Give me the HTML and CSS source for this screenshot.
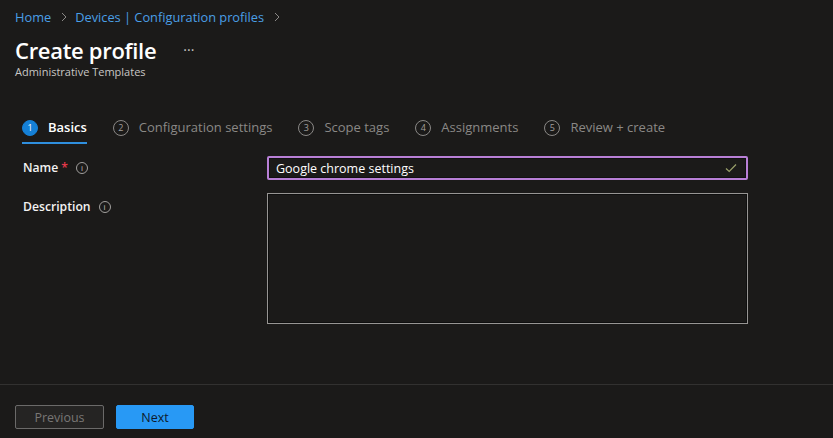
FILE: index.html
```html
<!DOCTYPE html>
<html>
<head>
<meta charset="utf-8">
<link rel="stylesheet" href="styles.css">
</head>
<body>
<div class="page">
  <div class="main">
    <nav class="crumbs">
      <a class="crumb">Home</a>
      <span class="chev"><svg width="8" height="10" viewBox="0 0 8 10"><path d="M2 1 L6 5 L2 9" fill="none" stroke="#8a8886" stroke-width="1"/></svg></span>
      <a class="crumb">Devices | Configuration profiles</a>
      <span class="chev"><svg width="8" height="10" viewBox="0 0 8 10"><path d="M2 1 L6 5 L2 9" fill="none" stroke="#8a8886" stroke-width="1"/></svg></span>
    </nav>
    <div class="title-row">
      <h1 class="title">Create profile</h1>
      <span class="more">···</span>
    </div>
    <div class="subtitle">Administrative Templates</div>

    <div class="steps">
      <div class="step active"><span class="num">1</span><span class="label">Basics</span></div>
      <div class="step"><span class="num">2</span><span class="label">Configuration settings</span></div>
      <div class="step"><span class="num">3</span><span class="label">Scope tags</span></div>
      <div class="step"><span class="num">4</span><span class="label">Assignments</span></div>
      <div class="step"><span class="num">5</span><span class="label">Review + create</span></div>
    </div>

    <div class="form">
      <div class="row">
        <div class="field-label">Name<span class="req">*</span><span class="info">i</span></div>
        <div class="input">
          <span class="value">Google chrome settings</span>
          <svg class="check" width="12" height="10" viewBox="0 0 12 10"><path d="M1 5.5 L4.2 8.5 L11 1.5" fill="none" stroke="#9aa06a" stroke-width="1.2"/></svg>
        </div>
      </div>
      <div class="row">
        <div class="field-label desc">Description<span class="info">i</span></div>
        <div class="textarea"></div>
      </div>
    </div>
  </div>
  <div class="footer">
    <button class="btn prev">Previous</button>
    <button class="btn next">Next</button>
  </div>
</div>
</body>
</html>
```
FILE: styles.css
```css
html, body {
  margin: 0;
  padding: 0;
  background: #1b1a19;
}
body {
  font-family: "Open Sans", "Noto Sans", sans-serif;
  color: #ffffff;
  width: 833px;
  height: 438px;
  overflow: hidden;
}
.page {
  display: flex;
  flex-direction: column;
  height: 438px;
}
.main {
  flex: 1;
  padding: 8px 15px 0 15px;
}
.crumbs {
  display: flex;
  align-items: center;
  height: 18px;
  font-size: 12.8px;
}
.crumb {
  color: #4a9fe6;
}
.chev {
  display: flex;
  align-items: center;
  margin: 0 7px 0 9px;
}
.title-row {
  display: flex;
  align-items: center;
  margin-top: 11px;
  height: 26px;
}
.title {
  margin: 0;
  font-size: 22px;
  font-weight: 600;
  letter-spacing: -0.3px;
  color: #ffffff;
}
.more {
  margin-left: 27px;
  font-size: 14px;
  color: #c8c6c4;
  position: relative;
  top: -1px;
}
.subtitle {
  font-size: 11px;
  color: #c8c6c4;
  margin-top: 1px;
}
.steps {
  display: flex;
  margin-top: 39px;
  padding-left: 7px;
  height: 30px;
  gap: 26px;
}
.step {
  display: flex;
  align-items: flex-start;
  height: 26px;
  color: #8a8886;
  font-size: 13px;
}
.step .num {
  width: 14px;
  height: 14px;
  border: 1px solid #8a8886;
  border-radius: 50%;
  font-size: 9px;
  line-height: 14px;
  text-align: center;
  margin-right: 10px;
  margin-top: 2px;
  color: #a19f9d;
}
.step .label {
  line-height: 18px;
}
.step.active {
  border-bottom: 2px solid #2f8fde;
  height: 24px;
}
.step.active .num {
  background: #1580d6;
  border-color: #1580d6;
  color: #ffffff;
}
.step.active .label {
  color: #ffffff;
  font-weight: 600;
}
.form {
  padding-left: 8px;
  margin-top: 8px;
}
.row {
  display: flex;
  margin-bottom: 13px;
}
.field-label {
  width: 244px;
  display: flex;
  align-items: flex-start;
  font-size: 12.2px;
  font-weight: 600;
  color: #f3f2f1;
  padding-top: 3px;
}
.field-label.desc {
  padding-top: 5px;
}
.req {
  color: #e3384a;
  margin-left: 3px;
}
.info {
  width: 10px;
  height: 10px;
  border: 1px solid #a19f9d;
  border-radius: 50%;
  font-size: 8px;
  line-height: 10px;
  text-align: center;
  color: #c8c6c4;
  font-weight: 400;
  margin-left: 8px;
  margin-top: 3px;
}
.input {
  box-sizing: border-box;
  width: 481px;
  height: 24px;
  border: 2px solid #b87fd6;
  border-radius: 2px;
  background: #1b1a19;
  display: flex;
  align-items: center;
  justify-content: space-between;
  padding: 0 9px 0 7px;
  box-shadow: inset 0 0 0 1px #111;
}
.value {
  font-size: 12.5px;
  color: #ffffff;
}
.textarea {
  box-sizing: border-box;
  width: 481px;
  height: 131px;
  border: 1px solid #979593;
  box-shadow: inset 0 0 0 1px #0e0e0e;
  background: #1b1a19;
}
.footer {
  height: 54px;
  border-top: 1px solid #323130;
  display: flex;
  align-items: flex-start;
  padding: 20px 15px 0;
  gap: 12px;
  box-sizing: border-box;
}
.btn {
  height: 24px;
  font-family: "Open Sans", "Noto Sans", sans-serif;
  font-size: 12.5px;
  border-radius: 2px;
  padding: 0;
}
.prev {
  width: 89px;
  background: #252423;
  border: 1px solid #6b6a69;
  color: #797775;
}
.next {
  width: 78px;
  background: #2899f5;
  border: 1px solid #2899f5;
  color: #0d1a2b;
}
```
